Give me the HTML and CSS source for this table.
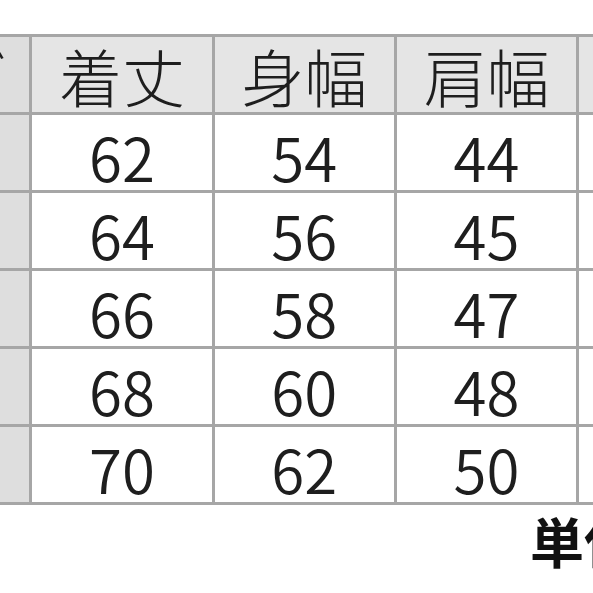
FILE: index.html
```html
<!DOCTYPE html>
<html lang="ja">
<head>
<meta charset="utf-8">
<title>サイズ表</title>
<link rel="stylesheet" href="styles.css">
</head>
<body>
<div class="page">
  <div class="grid">
    <div class="cell head label">サイズ</div>
    <div class="cell head">着丈</div>
    <div class="cell head">身幅</div>
    <div class="cell head">肩幅</div>
    <div class="cell head">袖丈</div>

    <div class="cell label">S</div>
    <div class="cell">62</div>
    <div class="cell">54</div>
    <div class="cell">44</div>
    <div class="cell">60</div>

    <div class="cell label">M</div>
    <div class="cell">64</div>
    <div class="cell">56</div>
    <div class="cell">45</div>
    <div class="cell">61</div>

    <div class="cell label">L</div>
    <div class="cell">66</div>
    <div class="cell">58</div>
    <div class="cell">47</div>
    <div class="cell">62</div>

    <div class="cell label">XL</div>
    <div class="cell">68</div>
    <div class="cell">60</div>
    <div class="cell">48</div>
    <div class="cell">63</div>

    <div class="cell label">XXL</div>
    <div class="cell">70</div>
    <div class="cell">62</div>
    <div class="cell">50</div>
    <div class="cell">64</div>
  </div>
  <div class="unit">単位：cm</div>
</div>
</body>
</html>
```
FILE: styles.css
```css
html, body {
  margin: 0;
  padding: 0;
  background: #ffffff;
  overflow: hidden;
}
.page {
  width: 593px;
  height: 593px;
  overflow: hidden;
  padding-top: 34px;
  box-sizing: border-box;
  font-family: "Noto Sans CJK JP", "Liberation Sans", sans-serif;
  color: #1e1e1e;
}
.grid {
  display: grid;
  grid-template-columns: 179.3px 179.3px 179.3px 179.3px 179.3px;
  grid-auto-rows: 75px;
  gap: 3px;
  padding: 3px;
  background: #a6a6a6;
  width: max-content;
  margin-left: -153px;
}
.cell {
  background: #ffffff;
  display: flex;
  align-items: center;
  justify-content: center;
  font-size: 60px;
  font-weight: 350;
  line-height: 1;
  padding-top: 6px;
  box-sizing: border-box;
  white-space: nowrap;
}
.head {
  background: #e5e5e5;
  font-size: 63px;
  font-weight: 300;
  padding-top: 0;
}
.label {
  background: #dedede;
}
.head.label {
  justify-content: flex-end;
  padding-right: 22px;
}
.unit {
  padding-left: 530px;
  margin-top: 9px;
  font-size: 54px;
  font-weight: 700;
  line-height: 1;
  white-space: nowrap;
  color: #111111;
}
```
